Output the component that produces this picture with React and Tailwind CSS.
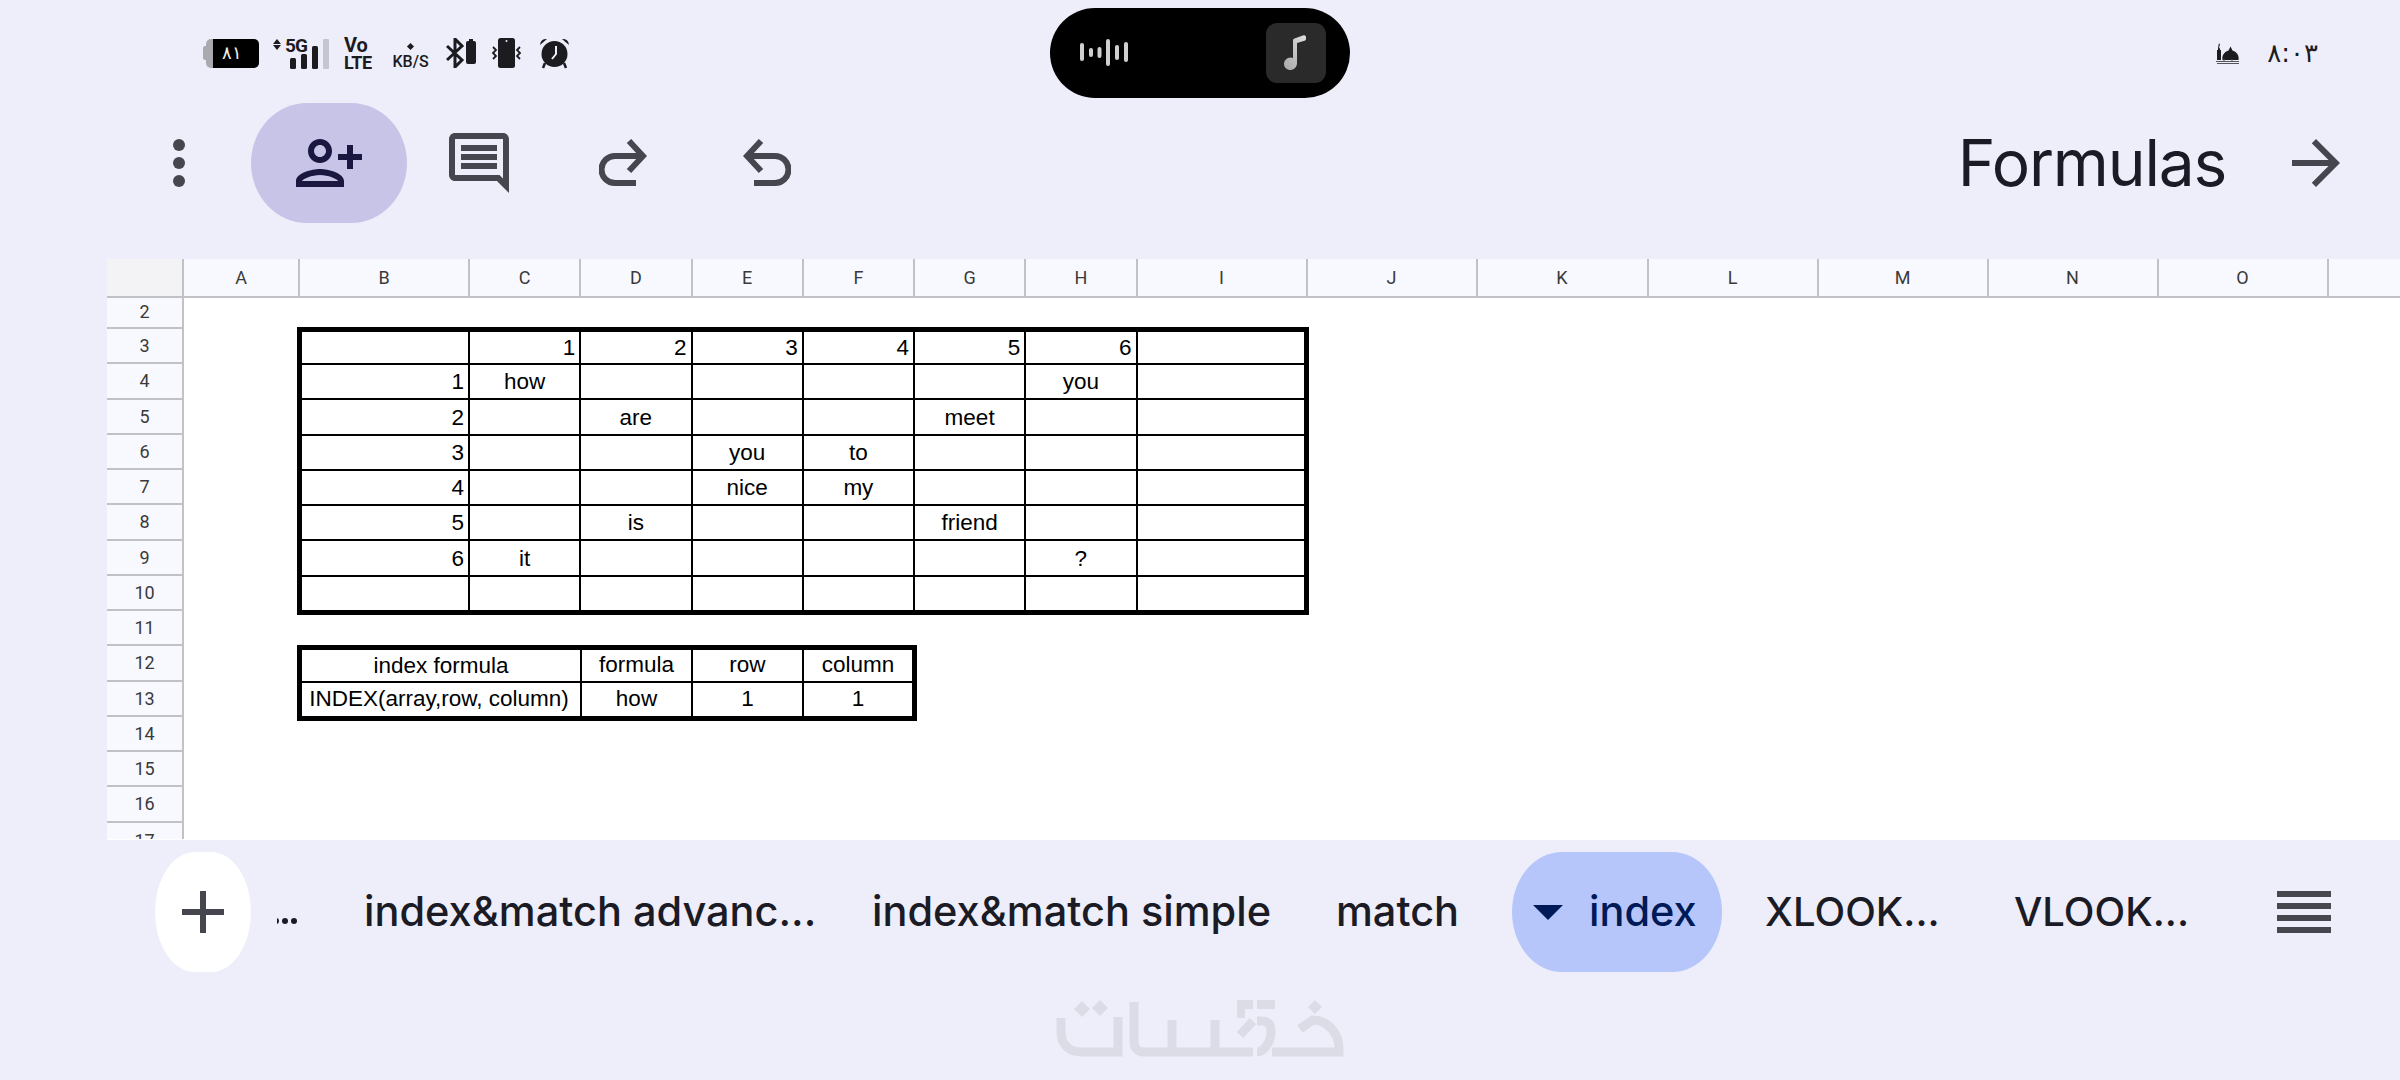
import { Fragment } from 'react';

const columns = [
    ['A', 'w-[116px]'], ['B', 'w-[170px]'], ['C', 'w-[111.25px]'], ['D', 'w-[111.25px]'], ['E', 'w-[111.25px]'],
    ['F', 'w-[111.25px]'], ['G', 'w-[111.25px]'], ['H', 'w-[111.25px]'], ['I', 'w-[170px]'], ['J', 'w-[170px]'],
    ['K', 'w-[171px]'], ['L', 'w-[170px]'], ['M', 'w-[170px]'], ['N', 'w-[170px]'], ['O', 'w-[170px]'],
];

const rowNumbers = [3, 4, 5, 6, 7, 8, 9, 10, 11, 12, 13, 14, 15, 16];

const wordGrid = [
    ['', '1', '2', '3', '4', '5', '6', ''],
    ['1', 'how', '', '', '', '', 'you', ''],
    ['2', '', 'are', '', '', 'meet', '', ''],
    ['3', '', '', 'you', 'to', '', '', ''],
    ['4', '', '', 'nice', 'my', '', '', ''],
    ['5', '', 'is', '', '', 'friend', '', ''],
    ['6', 'it', '', '', '', '', '?', ''],
    ['', '', '', '', '', '', '', ''],
];

const Material = ({ d, className = 'h-[72px] w-[72px] fill-[#46464f]' }) => (
    <svg viewBox="0 0 24 24" className={className}>
        <path d={d} />
    </svg>
);

const Battery = () => (
    <div className="flex h-[29px] w-[56px] items-center">
        <div className="h-[14px] w-[3px] rounded-l-[2px] bg-[#a9a9b0]" />
        <div className="h-full w-[7px] rounded-l-[5px] bg-[#a9a9b0]" />
        <div className="flex h-full w-[46px] items-center justify-center rounded-r-[5px] bg-black pr-[8px] font-['DejaVu_Sans'] text-[18px] font-light leading-none text-[#eeeeee]">
            ۸۱
        </div>
    </div>
);

const Signal = () => (
    <div className="relative h-[31px] w-[56px]">
        <svg viewBox="0 0 56 31" className="h-[31px] w-[56px]">
            <path d="M4 1l4 5H0zM4 12L0 7h8z" fill="#1b1b20" />
            <rect x="17" y="20" width="6" height="11" rx="1.5" fill="#1b1b20" />
            <rect x="28" y="16" width="6" height="15" rx="1.5" fill="#1b1b20" />
            <rect x="39" y="8" width="6" height="23" rx="1.5" fill="#1b1b20" />
            <rect x="50" y="1" width="6" height="30" rx="1" fill="#c5c5cf" />
        </svg>
        <span className="absolute left-[12px] top-[-1px] font-['Roboto'] text-[19px] font-bold leading-[17px] tracking-[-1px] text-[#1b1b20]">5G</span>
    </div>
);

const VoLte = () => (
    <div className="flex w-[28px] flex-col items-start font-['Roboto'] font-bold leading-none text-[#1b1b20]">
        <span className="h-[18px] text-[20px] leading-[15px]">Vo</span>
        <span className="whitespace-nowrap text-[18px] leading-[13px] tracking-[-0.5px]">LTE</span>
    </div>
);

const NetSpeed = () => (
    <div className="flex w-[37px] flex-col items-center pt-[6px] font-['Roboto'] font-medium text-[#1b1b20]">
        <div className="mb-[7px] h-[5px] w-[5px] rotate-45 bg-[#1b1b20]" />
        <span className="whitespace-nowrap text-[16px] leading-[12px]">KB/S</span>
    </div>
);

const BluetoothBattery = () => (
    <svg viewBox="0 0 30 30" className="h-[30px] w-[30px]">
        <path d="M1 8l15 14-7 7V1l7 7L1 22" fill="none" stroke="#1b1b20" strokeWidth="3" />
        <rect x="20" y="3" width="10" height="23" rx="2" fill="#1b1b20" />
        <rect x="23" y="1" width="4" height="3" fill="#1b1b20" />
    </svg>
);

const Vibrate = () => (
    <svg viewBox="0 0 31 30" className="h-[30px] w-[31px]">
        <rect x="7" y="0" width="17" height="30" rx="2.5" fill="#1b1b20" />
        <circle cx="15.5" cy="3" r="1" fill="#eeeefb" />
        <path d="M2 9l3 3-3 3 3 3-3 3M29 9l-3 3 3 3-3 3 3 3" fill="none" stroke="#1b1b20" strokeWidth="1.8" />
    </svg>
);

const Alarm = () => (
    <svg viewBox="0 0 31 32" className="h-[32px] w-[31px]">
        <path d="M1 8a6 6 0 0 1 7-6zM30 8a6 6 0 0 0-7-6z" fill="#1b1b20" />
        <path d="M6 26l-2 5M25 26l2 5" stroke="#1b1b20" strokeWidth="2.5" />
        <circle cx="15.5" cy="17" r="13" fill="#1b1b20" />
        <path d="M17 9v8l-4 5" fill="none" stroke="#eeeefb" strokeWidth="2" />
    </svg>
);

const Mosque = () => (
    <svg viewBox="0 0 23 21" className="h-[21px] w-[23px]">
        <path d="M3 0l1 2-1 2 1 2v1h1v10H1V7h1V5z" fill="#1b1b20" />
        <path d="M6.500 17C5.500 12 9 8.500 12.500 7.500L14.500 3.500l2 4C20 8.500 23.500 12 22.500 17z" fill="#1b1b20" />
        <path d="M0 18.500h23M1 20.500h22M8 16v2M16 16v2" stroke="#55555c" strokeWidth="1" fill="none" />
    </svg>
);

const MusicPill = () => (
    <div className="flex h-[90px] w-[300px] items-center justify-between rounded-full bg-black pl-[30px] pr-[24px]">
        <svg viewBox="0 0 48 28" className="h-[28px] w-[48px]">
            <g fill="#cfcfcf">
                <rect x="0" y="4" width="4" height="18" rx="2" />
                <rect x="9" y="9" width="4" height="9" rx="2" />
                <rect x="17.500" y="8" width="4" height="11" rx="2" />
                <rect x="26" y="0" width="4" height="27" rx="2" />
                <rect x="35" y="6" width="4" height="15" rx="2" />
                <rect x="44" y="3" width="4" height="20" rx="2" />
            </g>
        </svg>
        <div className="flex h-[60px] w-[60px] items-center justify-center rounded-[11px] bg-[#2a2a2a]">
            <svg viewBox="0 0 24 36" className="h-[36px] w-[24px]">
                <defs>
                    <linearGradient id="note" x1="0" y1="1" x2="1" y2="0">
                        <stop offset="0" stopColor="#a8a8a8" />
                        <stop offset="1" stopColor="#dedede" />
                    </linearGradient>
                </defs>
                <path d="M9 5.500c0-1 .6-1.800 1.500-2L19.500.300c1.500-.4 2.500.6 2.500 2v1.500c0 1-.5 1.700-1.500 2L13 8v20c0 4-3 7-6.500 7S0 32.500 0 29s3-6.500 6.500-6.500c1 0 1.800.2 2.500.5z" fill="url(#note)" />
            </svg>
        </div>
    </div>
);

const StatusBar = () => (
    <div className="mt-[8px] flex h-[90px] items-center pl-[203px] pr-[82px]">
        <div className="flex w-[847px] items-center">
            <Battery />
            <div className="ml-[14px]"><Signal /></div>
            <div className="ml-[15px]"><VoLte /></div>
            <div className="ml-[20px]"><NetSpeed /></div>
            <div className="ml-[17px]"><BluetoothBattery /></div>
            <div className="ml-[15px]"><Vibrate /></div>
            <div className="ml-[17px]"><Alarm /></div>
        </div>
        <MusicPill />
        <div className="ml-auto flex items-center gap-[28px]">
            <Mosque />
            <span className="font-['DejaVu_Sans'] text-[26px] leading-none text-[#1b1b20]" dir="ltr">۸:۰۳</span>
        </div>
    </div>
);

const Toolbar = () => (
    <div className="mt-[5px] flex h-[120px] items-center pr-[48px]">
        <div className="ml-[173px] flex w-[12px] flex-col gap-[6px]">
            <div className="h-[12px] w-[12px] rounded-full bg-[#46464f]" />
            <div className="h-[12px] w-[12px] rounded-full bg-[#46464f]" />
            <div className="h-[12px] w-[12px] rounded-full bg-[#46464f]" />
        </div>
        <div className="ml-[66px] flex h-[120px] w-[156px] items-center justify-center rounded-[56px/60px] bg-[#c7c4e8]">
            <Material
                className="h-[72px] w-[72px] fill-[#1a1740]"
                d="M13 8c0-2.210-1.790-4-4-4S5 5.790 5 8s1.790 4 4 4 4-1.790 4-4zm-2 0c0 1.100-.9 2-2 2s-2-.9-2-2 .9-2 2-2 2 .9 2 2zM1 18v2h16v-2c0-2.660-5.330-4-8-4s-8 1.340-8 4zm2 0c.2-.71 3.300-2 6-2 2.690 0 5.780 1.280 6 2H3zM20 14v-3h3V9h-3V6h-2v3h-3v2h3v3h2z"
            />
        </div>
        <div className="ml-[36px]">
            <Material d="M21.990 4c0-1.100-.89-2-1.990-2H4c-1.100 0-2 .9-2 2v12c0 1.100.9 2 2 2h14l4 4-.01-18zM20 4v13.170L18.830 16H4V4h16zM6 12h12v2H6zm0-3h12v2H6zm0-3h12v2H6z" />
        </div>
        <svg viewBox="0 0 48 48" className="ml-[84px] h-[48px] w-[48px]" fill="none" stroke="#46464f" strokeWidth="6">
            <path d="M30 2l14 15-14 15" />
            <path d="M43 17H16a13 13 0 0 0 0 27h21" />
        </svg>
        <svg viewBox="0 0 48 48" className="ml-[96px] h-[48px] w-[48px]" fill="none" stroke="#46464f" strokeWidth="6">
            <path d="M18 2L4 17l14 15" />
            <path d="M5 17h27a13 13 0 0 1 0 27H11" />
        </svg>
        <span className="ml-auto font-['Inter'] text-[64px] font-normal leading-none tracking-[-1.2px] text-[#1b1b25]">Formulas</span>
        <div className="ml-[54px]">
            <Material d="M12 4l-1.410 1.410L16.170 11H4v2h12.170l-5.580 5.590L12 20l8-8z" />
        </div>
    </div>
);

const ColumnHeader = () => (
    <div className="flex h-[39px] border-b-2 border-[#c1c1c6] bg-[#f8f9fe] font-['Roboto'] text-[18px] text-[#3a3a3a]">
        <div className="w-[77px] shrink-0 border-r-2 border-[#c1c1c6] bg-[#f3f3f6]" />
        {columns.map(([letter, width]) => (
            <div key={letter} className={`flex shrink-0 items-center justify-center border-r-2 border-[#c1c1c6] ${width}`}>
                {letter}
            </div>
        ))}
    </div>
);

const RowHeader = () => (
    <div className="w-[77px] shrink-0 border-r-2 border-[#c1c1c6] bg-[#f8f9fe] font-['Roboto'] text-[18px] text-[#3a3a3a]">
        <div className="flex h-[31px] items-end justify-center border-b-2 border-[#c1c1c6] pb-[5px] leading-[20px]">2</div>
        {rowNumbers.map((n) => (
            <div key={n} className="flex h-[35.25px] items-center justify-center border-b-2 border-[#c1c1c6]">
                {n}
            </div>
        ))}
        <div className="flex h-[16px] items-start justify-center overflow-hidden pt-[8px] leading-[20px]">17</div>
    </div>
);

const WordTable = () => (
    <div className="grid h-[288px] w-[1012px] grid-cols-[168px_repeat(6,111.25px)_1fr] grid-rows-[33px_repeat(6,35.25px)_1fr] border-[5px] border-black">
        {wordGrid.map((row, r) => (
            <Fragment key={r}>
                {row.map((value, c) => {
                    const isNumber = value !== '' && !Number.isNaN(Number(value));
                    return (
                        <div
                            key={c}
                            className={`flex items-center border-black pt-[2px] ${isNumber ? 'justify-end pr-[4px]' : 'justify-center'} ${c < 7 ? 'border-r-2' : ''} ${r < 7 ? 'border-b-2' : ''}`}
                        >
                            {value}
                        </div>
                    );
                })}
            </Fragment>
        ))}
    </div>
);

const FormulaTable = () => (
    <div className="mt-[30px] grid h-[76px] w-[620px] grid-cols-[280px_111px_111px_1fr] grid-rows-[33px_1fr] border-[5px] border-black">
        <div className="flex items-center justify-center border-b-2 border-r-2 border-black pt-[2px]">index formula</div>
        <div className="flex items-center justify-center border-b-2 border-r-2 border-black">formula</div>
        <div className="flex items-center justify-center border-b-2 border-r-2 border-black">row</div>
        <div className="flex items-center justify-center border-b-2 border-black">column</div>
        <div className="flex items-center justify-center whitespace-nowrap border-r-2 border-black pr-[4px]">INDEX(array,row, column)</div>
        <div className="flex items-center justify-center border-r-2 border-black">how</div>
        <div className="flex items-center justify-center border-r-2 border-black">1</div>
        <div className="flex items-center justify-center">1</div>
    </div>
);

const Sheet = () => (
    <div className="ml-[107px] mt-[36px] h-[581px] overflow-hidden bg-white">
        <ColumnHeader />
        <div className="flex">
            <RowHeader />
            <div className="pl-[113px] pt-[29px] font-['Liberation_Sans'] text-[22.5px] leading-none text-black">
                <WordTable />
                <FormulaTable />
            </div>
        </div>
    </div>
);

const Tab = ({ width, margin, size = 'text-[41.5px]', children }) => (
    <span className={`whitespace-nowrap font-['Inter'] font-medium leading-none text-[#1b1b25] ${size} ${width} ${margin}`}>
        {children}
    </span>
);

const SheetTabs = () => (
    <div className="mt-[12px] flex h-[120px] items-center">
        <div className="ml-[155px] flex h-[120px] w-[96px] items-center justify-center rounded-[40px/60px] bg-white">
            <Material d="M19 13h-6v6h-2v-6H5v-2h6V5h2v6h6v2z" />
        </div>
        <div className="ml-[26px] flex h-[40px] w-[20px] items-center justify-end gap-[3px] overflow-hidden pt-[18px]">
            <div className="h-[6px] w-[6px] shrink-0 rounded-full bg-[#1b1b25]" />
            <div className="h-[6px] w-[6px] shrink-0 rounded-full bg-[#1b1b25]" />
            <div className="h-[6px] w-[6px] shrink-0 rounded-full bg-[#1b1b25]" />
        </div>
        <Tab width="w-[447px]" margin="ml-[67px]">index&amp;match advanc...</Tab>
        <Tab width="w-[400px]" margin="ml-[61px]">index&amp;match simple</Tab>
        <Tab width="w-[123px]" margin="ml-[64px]">match</Tab>
        <div className="ml-[53px] flex h-[120px] w-[210px] items-center rounded-[50px/60px] bg-[#b6c6fb] pl-[21px]">
            <svg viewBox="0 0 30 15" className="h-[15px] w-[30px] fill-[#001a57]">
                <path d="M0 0h30L15 15z" />
            </svg>
            <span className="ml-[26px] font-['Inter'] text-[41.5px] font-medium leading-none text-[#001a57]">index</span>
        </div>
        <Tab width="w-[173px]" margin="ml-[43px]" size="text-[40px]">XLOOK...</Tab>
        <Tab width="w-[173px]" margin="ml-[76px]" size="text-[40px]">VLOOK...</Tab>
        <div className="ml-[90px] flex w-[54px] flex-col gap-[6px]">
            <div className="h-[6px] bg-[#46464f]" />
            <div className="h-[6px] bg-[#46464f]" />
            <div className="h-[6px] bg-[#46464f]" />
            <div className="h-[6px] bg-[#46464f]" />
        </div>
    </div>
);

// watermark logo, coordinates are page pixels
const WatermarkLogo = () => (
    <svg viewBox="1050 995 300 66" className="ml-[1050px] mt-[23px] h-[66px] w-[300px]" fill="none" stroke="#dcdce7" strokeWidth="9">
        <path d="M1061 1018v13c0 14 8 21 21 21h36v-35" />
        <path d="M1134 1002v40c0 6 4 10 10 10h109" />
        <path d="M1172 1052v-32M1215 1052v-32" />
        <path d="M1240 1035l13-14" />
        <path d="M1257 1021h5q9 0 9 10c0 14-9 21-14 21" />
        <path d="M1272 1052h67v-4c0-16-13-28-26-28l-13 9" />
        <g fill="#dcdce7" stroke="none">
            <path d="M1237 1000h16v9h-8v9h-8zM1257 1000h18v9h-18z" />
            <path d="M1082 1001l8 8-8 8-8-8zM1100 1000l8 8-8 8-8-8zM1315 1000l7 7-7 7-7-7z" />
        </g>
    </svg>
);

const App = () => (
    <div className="flex h-[1080px] w-[2400px] flex-col overflow-hidden bg-[#eeeefb]">
        <StatusBar />
        <Toolbar />
        <Sheet />
        <SheetTabs />
        <WatermarkLogo />
    </div>
);

export default App;
